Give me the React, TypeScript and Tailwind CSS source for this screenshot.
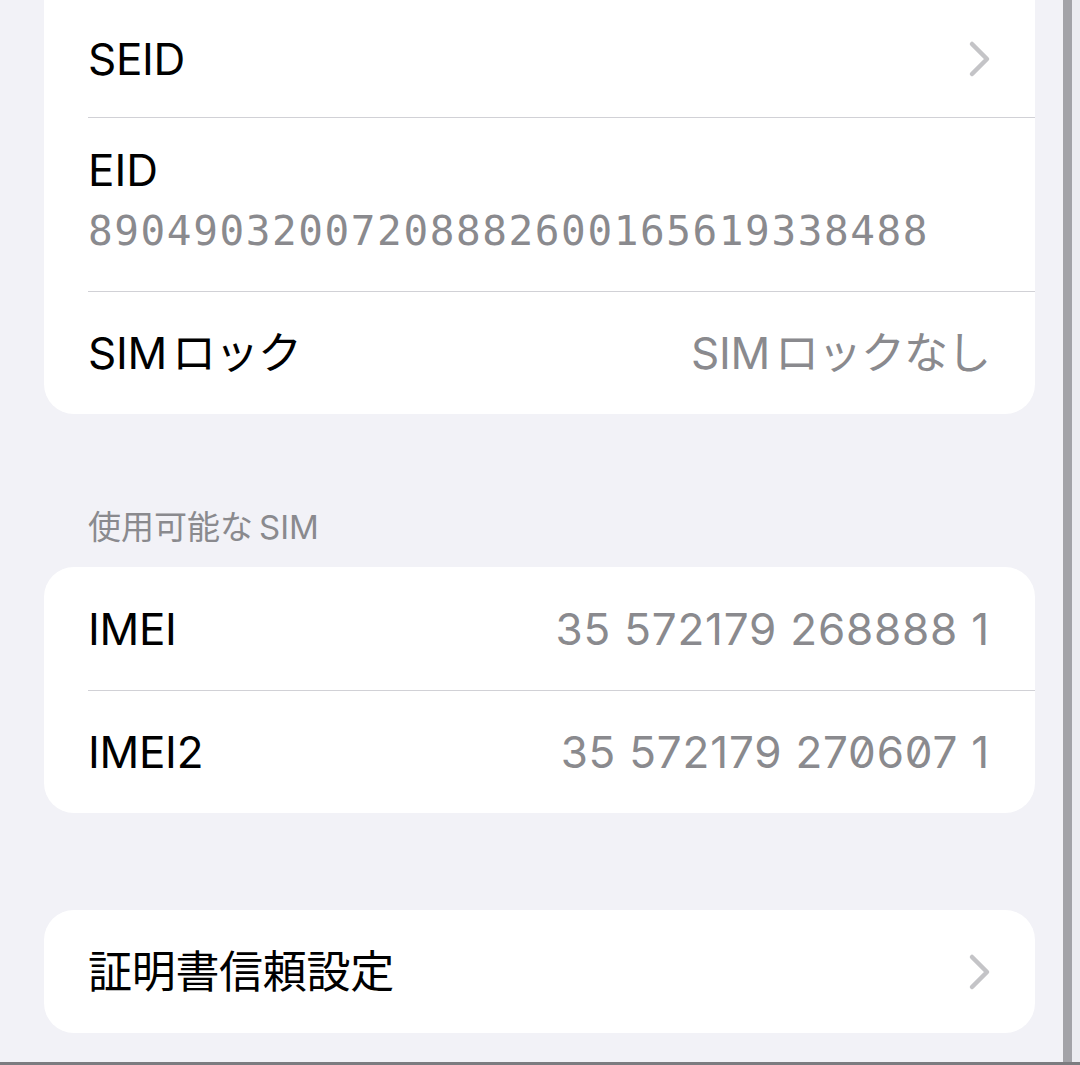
import React from 'react';

const Chevron = () => (
    <svg width="24" height="38" viewBox="0 0 24 38" className="shrink-0 -mr-[2px]">
        <polyline points="4,4 19,19 4,34" fill="none" stroke="#c4c4c7" strokeWidth="4.5" strokeLinecap="round" strokeLinejoin="round" />
    </svg>
);

const Sep = () => <div className="ml-[44px] h-px bg-[#d1d1d6]" />;

// Latin + kana with the little gap iOS puts between them
const Mixed = ({ latin, kana }: { latin: string; kana: string }) => (
    <>
        {latin}
        <span className="ml-[5px] tracking-[-1px]">{kana}</span>
    </>
);

const Row = ({ label, value, chevron, h }: { label: React.ReactNode; value?: React.ReactNode; chevron?: boolean; h: string }) => (
    <div className={`flex items-center justify-between pl-[44px] pr-[45px] ${h}`}>
        <span className="text-[44px] text-black tracking-[-0.3px]">{label}</span>
        {value && <span className="text-[44px] text-[#8a8a8e] slashed-zero tracking-[0.8px]">{value}</span>}
        {chevron && <Chevron />}
    </div>
);

export default function App() {
    return (
        <div className="flex flex-col h-[1065px] w-[1080px] overflow-hidden bg-[#f2f2f7] font-['Inter','Noto_Sans_CJK_JP',sans-serif]">
            <div className="flex flex-1">
                <div className="flex-1 flex flex-col pl-[44px] pr-[28px]">
                    <div className="bg-white rounded-b-[30px]">
                        <Row label="SEID" chevron h="h-[117px]" />
                        <Sep />
                        <div className="h-[173px] pl-[44px] pt-[20px] flex flex-col">
                            <span className="text-[44px] text-black leading-[64px]">EID</span>
                            <span className="font-['DejaVu_Sans_Mono',monospace] text-[41px] tracking-[1.6px] text-[#8a8a8e] leading-[58px]">89049032007208882600165619338488</span>
                        </div>
                        <Sep />
                        <Row
                            label={<Mixed latin="SIM" kana="ロック" />}
                            value={<span className="tracking-[-0.3px]"><Mixed latin="SIM" kana="ロックなし" /></span>}
                            h="h-[122px]"
                        />
                    </div>
                    <div className="h-[153px] flex items-center pl-[44px] pt-[74px] text-[33px] text-[#8a8a8e]">
                        使用可能な<span className="ml-[6px]">SIM</span>
                    </div>
                    <div className="bg-white rounded-[30px]">
                        <Row label="IMEI" value="35 572179 268888 1" h="h-[123px]" />
                        <Sep />
                        <Row label="IMEI2" value="35 572179 270607 1" h="h-[122px]" />
                    </div>
                    <div className="h-[97px]" />
                    <div className="bg-white rounded-[30px]">
                        <Row label="証明書信頼設定" chevron h="h-[123px]" />
                    </div>
                </div>
                <div className="w-[9px] bg-[#a3a3a8]" />
                <div className="w-[8px] bg-[#ececf1]" />
            </div>
            <div className="h-[3px] bg-[#7c7c80]" />
        </div>
    );
}
